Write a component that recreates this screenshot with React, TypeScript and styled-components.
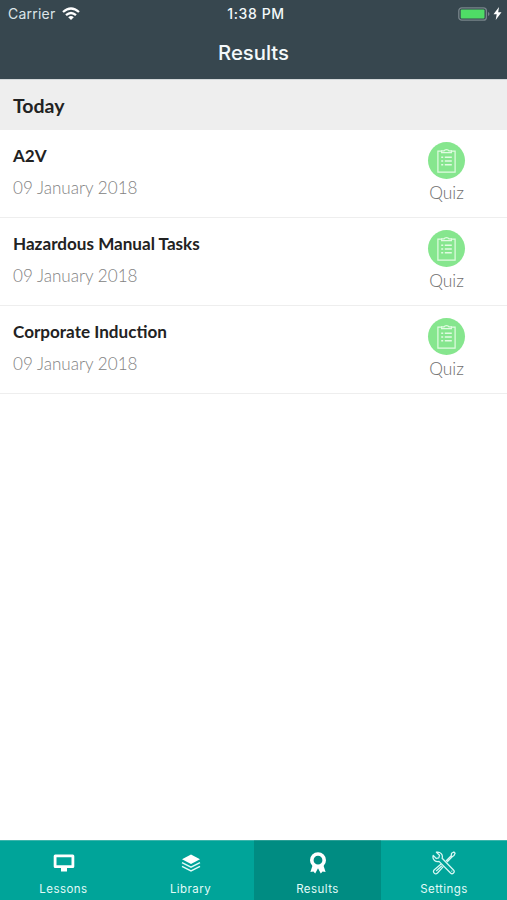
import React from "react";
import styled, { createGlobalStyle } from "styled-components";

const GlobalStyle = createGlobalStyle`
  * { box-sizing: border-box; }
  body { margin: 0; background: #fff; }
`;

const Screen = styled.div`
  width: 507px;
  height: 900px;
  display: flex;
  flex-direction: column;
  background: #fff;
  overflow: hidden;
  font-family: Lato, sans-serif;
`;

const Header = styled.header`
  height: 79px;
  flex: none;
  background: #37474f;
  color: #f4f9fb;
  font-family: Inter, sans-serif;
`;

const StatusBar = styled.div`
  height: 27px;
  display: grid;
  grid-template-columns: 1fr auto 1fr;
  align-items: center;
  padding: 0 5px 0 8px;
`;

const Carrier = styled.div`
  display: flex;
  align-items: center;
  gap: 7px;
  font-size: 14px;
  letter-spacing: 0.22px;
  color: #dce5e9;
`;

const Clock = styled.div`
  font-size: 14px;
  font-weight: 500;
  letter-spacing: 0.6px;
  padding-left: 2px;
`;

const Power = styled.div`
  display: flex;
  align-items: center;
  justify-content: flex-end;
  gap: 3px;
`;

const Title = styled.h1`
  margin: 0;
  height: 52px;
  font-size: 20.3px;
  line-height: 52px;
  font-weight: 450;
  letter-spacing: 0;
  text-align: center;
`;

const SectionHeader = styled.h2`
  margin: 0;
  height: 51px;
  flex: none;
  padding: 0 13px;
  font-size: 19.5px;
  line-height: 51px;
  font-weight: 700;
  color: #222;
  background: #eeeeee;
  border-top: 1px solid #d3d8da;
`;

const List = styled.ul`
  list-style: none;
  margin: 0;
  padding: 0;
  flex: 1;
`;

const Row = styled.li`
  height: 88px;
  display: flex;
  justify-content: space-between;
  padding: 0 42px 0 13px;
  border-bottom: 1px solid #eeeeee;
`;

const RowText = styled.div`
  padding-top: 14px;
`;

const RowTitle = styled.div`
  font-size: 17.1px;
  line-height: 24px;
  font-weight: 700;
  color: #222;
`;

const RowDate = styled.div`
  margin-top: 8px;
  font-size: 17.1px;
  line-height: 24px;
  font-weight: 300;
  color: #828282;
`;

const Kind = styled.div`
  width: 37px;
  padding-top: 12px;
  display: flex;
  flex-direction: column;
  align-items: center;
  font-size: 17.4px;
  line-height: 27px;
  font-weight: 300;
  color: #6f6f6f;
`;

const Badge = styled.div`
  width: 37px;
  height: 37px;
  flex: none;
  border-radius: 50%;
  background: #86e68e;
  display: flex;
  align-items: center;
  justify-content: center;
`;

const TabBar = styled.nav`
  height: 60px;
  flex: none;
  display: grid;
  grid-template-columns: repeat(3, 127px) 1fr;
  background: #00a499;
`;

const Tab = styled.div<{ $active?: boolean }>`
  display: flex;
  flex-direction: column;
  align-items: center;
  padding-top: 9px;
  background: ${(p) => (p.$active ? "#008c82" : "transparent")};
  border-top: 1px solid ${(p) => (p.$active ? "#2b9f96" : "#3cb5ac")};
  color: #e2fbf8;
  font-family: Inter, sans-serif;
  font-size: 11.5px;
  line-height: 14px;
  letter-spacing: 0.45px;
`;

const IconBox = styled.div`
  height: 26px;
  margin-bottom: 6px;
  display: flex;
  align-items: center;
  justify-content: center;
`;

const Wifi = () => (
  <svg width="18" height="14" viewBox="0 0 18 14" fill="none" stroke="#fff" strokeWidth="2.3">
    <path d="M1 5Q9-2 17 5" />
    <path d="M4 8.2Q9 3.8 14 8.2" />
    <path d="M6.2 10.2Q9 8 11.8 10.2L9 13Z" fill="#fff" stroke="none" />
  </svg>
);

const Battery = () => (
  <svg width="32" height="14" viewBox="0 0 32 14">
    <rect x=".8" y=".8" width="27.6" height="12.4" rx="3" fill="none" stroke="#78858b" strokeWidth="1.3" />
    <rect x="2.7" y="2.5" width="23.8" height="9" rx="1" fill="#4fdc66" />
    <path d="M30 5q1.5.6 1.5 2T30 9z" fill="#78858b" />
  </svg>
);

const Bolt = () => (
  <svg width="9" height="13" viewBox="0 0 9 13">
    <path d="M6 0 .5 7.3h3.2L2.7 13 8.5 5.2H5.2z" fill="#fff" />
  </svg>
);

const Clipboard = () => (
  <svg width="19" height="24" viewBox="0 0 19 24" fill="none" stroke="#e1fbe2" strokeWidth="1.2">
    <path d="M5 2.1H.9V23.1h17.2V2.1H14" />
    <path d="M4.6 3.6V1.8h2.5Q7.6.6 9.5.6t2.4 1.2h2.5v1.8z" />
    <path d="M4.2 8.3h2M7.8 8.3h7M4.2 12h2M7.8 12h7M4.2 15.7h2M7.8 15.7h7" strokeWidth="1.4" />
  </svg>
);

const Monitor = () => (
  <svg width="22" height="18" viewBox="0 0 22 18">
    <path
      fill="#fff"
      fillRule="evenodd"
      d="M2.2.5h17.6Q21.3.5 21.3 2v10.5q0 1.5-1.5 1.5H14v3.6H8V14H2.2Q.7 14 .7 12.5V2Q.7.5 2.2.5M3.5 3.2v8h15v-8z"
    />
  </svg>
);

const Layers = () => (
  <svg width="20" height="18" viewBox="0 0 20 18">
    <path d="m10 .5 9 4.7-9 4.7-9-4.7z" fill="#fff" />
    <path d="m1 8.7 9 4.5 9-4.5M1 12.4l9 4.5 9-4.5" fill="none" stroke="#e2fbf8" strokeWidth="1.5" />
  </svg>
);

const Award = () => (
  <svg width="18" height="22" viewBox="0 0 18 22">
    <path d="M4 12 1.4 20l3-.6L6.2 21.6 9 16.2l2.8 5.4 1.8-2.2 3 .6L14 12z" fill="#fff" />
    <circle cx="9" cy="8.2" r="6.2" fill="#008c82" stroke="#fff" strokeWidth="3.6" />
  </svg>
);

const Tools = () => (
  <svg width="24" height="24" viewBox="0 0 24 24" fill="none" stroke="#d7f7f3" strokeWidth="1.25" strokeLinejoin="round">
    <path d="M4.4 1.2 7.5 4.3 6.8 6.8 4.3 7.5 1.2 4.4Q.3 7.6 2.5 9.4q2 1.7 4.5 1L18.5 22q1.5 1.5 3 0t0-3L10.1 7.3q.9-2.7-.9-4.7-1.9-2.1-4.8-1.4Z" />
    <path d="m9.1 13.1-6.8 5.7q-1.7 1.7-.1 3.3t3.3-.1l6-6.7M14 10l5.2-5.2M15 11l5.2-5.2M19.2 4.8l.4-2.6 2.3-1.2 1.2 1.2-1.1 2.3-2.1 1.4z" />
    <path d="m4.2 20 5.7-5.2M19.5 19.7l.7.7" />
  </svg>
);

const results = ["A2V", "Hazardous Manual Tasks", "Corporate Induction"];

const tabs = [
  { label: "Lessons", icon: <Monitor /> },
  { label: "Library", icon: <Layers /> },
  { label: "Results", icon: <Award />, active: true },
  { label: "Settings", icon: <Tools /> },
];

export default function App() {
  return (
    <Screen>
      <GlobalStyle />
      <Header>
        <StatusBar>
          <Carrier>
            Carrier
            <Wifi />
          </Carrier>
          <Clock>1:38 PM</Clock>
          <Power>
            <Battery />
            <Bolt />
          </Power>
        </StatusBar>
        <Title>Results</Title>
      </Header>
      <SectionHeader>Today</SectionHeader>
      <List>
        {results.map((name) => (
          <Row key={name}>
            <RowText>
              <RowTitle>{name}</RowTitle>
              <RowDate>09 January 2018</RowDate>
            </RowText>
            <Kind>
              <Badge>
                <Clipboard />
              </Badge>
              Quiz
            </Kind>
          </Row>
        ))}
      </List>
      <TabBar>
        {tabs.map((tab) => (
          <Tab key={tab.label} $active={tab.active}>
            <IconBox>{tab.icon}</IconBox>
            {tab.label}
          </Tab>
        ))}
      </TabBar>
    </Screen>
  );
}
